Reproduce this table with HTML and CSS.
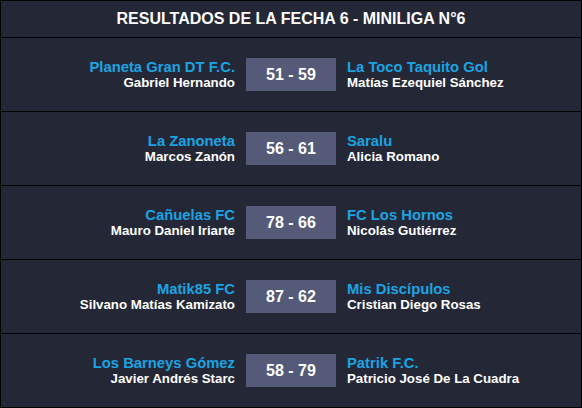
FILE: index.html
```html
<!DOCTYPE html>
<html lang="es">
<head>
<meta charset="utf-8">
<link rel="stylesheet" href="styles.css">
</head>
<body>
<div class="board">
  <div class="title">RESULTADOS DE LA FECHA 6 - MINILIGA N°6</div>
  <div class="match">
    <div class="side home"><div class="team">Planeta Gran DT F.C.</div><div class="coach">Gabriel Hernando</div></div>
    <div class="score">51 - 59</div>
    <div class="side away"><div class="team">La Toco Taquito Gol</div><div class="coach">Matías Ezequiel Sánchez</div></div>
  </div>
  <div class="match">
    <div class="side home"><div class="team">La Zanoneta</div><div class="coach">Marcos Zanón</div></div>
    <div class="score">56 - 61</div>
    <div class="side away"><div class="team">Saralu</div><div class="coach">Alicia Romano</div></div>
  </div>
  <div class="match">
    <div class="side home"><div class="team">Cañuelas FC</div><div class="coach">Mauro Daniel Iriarte</div></div>
    <div class="score">78 - 66</div>
    <div class="side away"><div class="team">FC Los Hornos</div><div class="coach">Nicolás Gutiérrez</div></div>
  </div>
  <div class="match">
    <div class="side home"><div class="team">Matik85 FC</div><div class="coach">Silvano Matías Kamizato</div></div>
    <div class="score">87 - 62</div>
    <div class="side away"><div class="team">Mis Discípulos</div><div class="coach">Cristian Diego Rosas</div></div>
  </div>
  <div class="match">
    <div class="side home"><div class="team">Los Barneys Gómez</div><div class="coach">Javier Andrés Starc</div></div>
    <div class="score">58 - 79</div>
    <div class="side away"><div class="team">Patrik F.C.</div><div class="coach">Patricio José De La Cuadra</div></div>
  </div>
</div>
</body>
</html>
```

FILE: styles.css
```css
html, body {
  margin: 0;
  padding: 0;
  background: #242836;
}
.board {
  width: 582px;
  height: 408px;
  box-sizing: border-box;
  border: 1px solid #000;
  background: #242836;
  font-family: "Liberation Sans", Arial, sans-serif;
  font-weight: bold;
  color: #fff;
  display: flex;
  flex-direction: column;
}
.title {
  height: 36px;
  display: flex;
  align-items: center;
  justify-content: center;
  font-size: 16px;
  border-bottom: 1px solid #000;
}
.match {
  height: 73px;
  display: grid;
  grid-template-columns: 1fr 90px 1fr;
  column-gap: 11px;
  align-items: center;
  border-bottom: 1px solid #000;
}
.match:last-child {
  border-bottom: none;
}
.home {
  text-align: right;
}
.away {
  text-align: left;
}
.team {
  color: #1ca3e2;
  font-size: 14.8px;
  line-height: 16px;
}
.coach {
  font-size: 13.3px;
  line-height: 16px;
}
.score {
  height: 33px;
  background: #545a78;
  display: flex;
  align-items: center;
  justify-content: center;
  font-size: 16px;
}
```
